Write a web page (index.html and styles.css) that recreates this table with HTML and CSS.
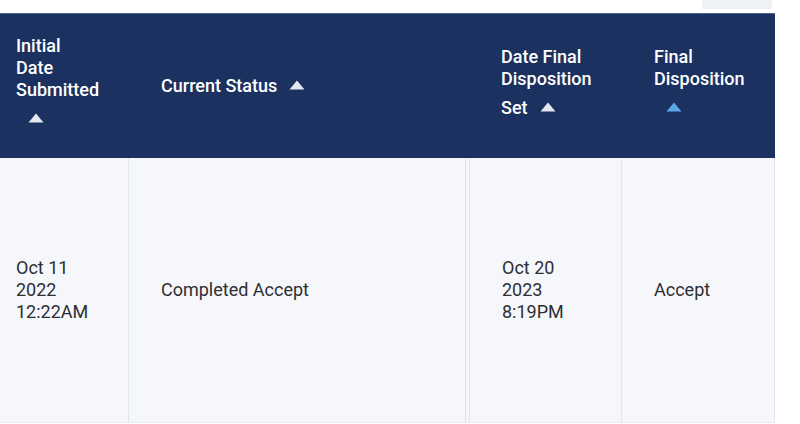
FILE: index.html
```html
<!DOCTYPE html>
<html lang="en">
<head>
<meta charset="utf-8">
<title>Submissions</title>
<link rel="stylesheet" href="styles.css">
</head>
<body>
<div class="page">
  <div class="toolbar"><div class="tool-tab"></div></div>
  <div class="table">
    <div class="row head">
      <div class="cell c1"><span class="label">Initial<br>Date<br>Submitted</span><span class="sort"><svg width="16" height="10" viewBox="0 0 16 10"><path d="M8 0.5L15.5 9.5H0.5Z" fill="#e4e7ee"/></svg></span></div>
      <div class="cell c2"><span class="label">Current Status</span><span class="sort"><svg width="16" height="10" viewBox="0 0 16 10"><path d="M8 0.5L15.5 9.5H0.5Z" fill="#e4e7ee"/></svg></span></div>
      <div class="cell c3"><span class="label">Date Final Disposition Set</span><span class="sort"><svg width="16" height="10" viewBox="0 0 16 10"><path d="M8 0.5L15.5 9.5H0.5Z" fill="#e4e7ee"/></svg></span></div>
      <div class="cell c4"><span class="label">Final Disposition</span><span class="sort"><svg width="16" height="10" viewBox="0 0 16 10"><path d="M8 0.5L15.5 9.5H0.5Z" fill="#5aa8e4"/></svg></span></div>
    </div>
    <div class="row body">
      <div class="cell c1">Oct 11 2022 12:22AM</div>
      <div class="cell c2">Completed Accept</div>
      <div class="cell c3">Oct 20 2023 8:19PM</div>
      <div class="cell c4">Accept</div>
    </div>
  </div>
</div>
</body>
</html>
```

FILE: styles.css
```css
html, body {
  margin: 0;
  padding: 0;
  background: #ffffff;
}

body {
  font-family: Roboto, "Liberation Sans", sans-serif;
  width: 800px;
  height: 424px;
  overflow: hidden;
}

.toolbar {
  display: flex;
  justify-content: flex-end;
  width: 775px;
  height: 13px;
}

.tool-tab {
  width: 70px;
  height: 9px;
  margin-right: 3px;
  background: #eef1f6;
}

.table {
  width: 775px;
}

.row {
  display: grid;
  grid-template-columns: 129px 340px 153px 153px;
}

.head {
  height: 145px;
  box-sizing: border-box;
  padding-bottom: 8px;
  background: #1b3160;
  border-top: 1px solid #4a6490;
  align-items: center;
}

.head .cell {
  color: #ffffff;
  font-size: 18px;
  font-weight: 500;
  line-height: 22px;
}

.sort {
  display: inline-block;
  margin-left: 12px;
  padding: 12px 0 7px 0;
  vertical-align: bottom;
  line-height: 0;
}

.sort svg {
  display: block;
}

.cell {
  box-sizing: border-box;
  padding: 0 29px 0 32px;
}

.cell.c1 {
  padding: 0 26px 0 16px;
}

.body {
  height: 264px;
  background: #f5f7fb;
  border-bottom: 1px solid #e6e9ee;
}

.body .cell {
  display: flex;
  align-items: center;
  font-size: 18px;
  line-height: 22px;
  color: #2e2e33;
}

.body .c1 {
  border-right: 1px solid #e1e4ea;
}

.body .c2 {
  border-right: 1px solid #e1e4ea;
  margin-right: 3px;
}

.body .c3 {
  border-left: 1px solid #e1e4ea;
  border-right: 1px solid #e1e4ea;
}

.body .c4 {
  border-right: 1px solid #e1e4ea;
}
```
